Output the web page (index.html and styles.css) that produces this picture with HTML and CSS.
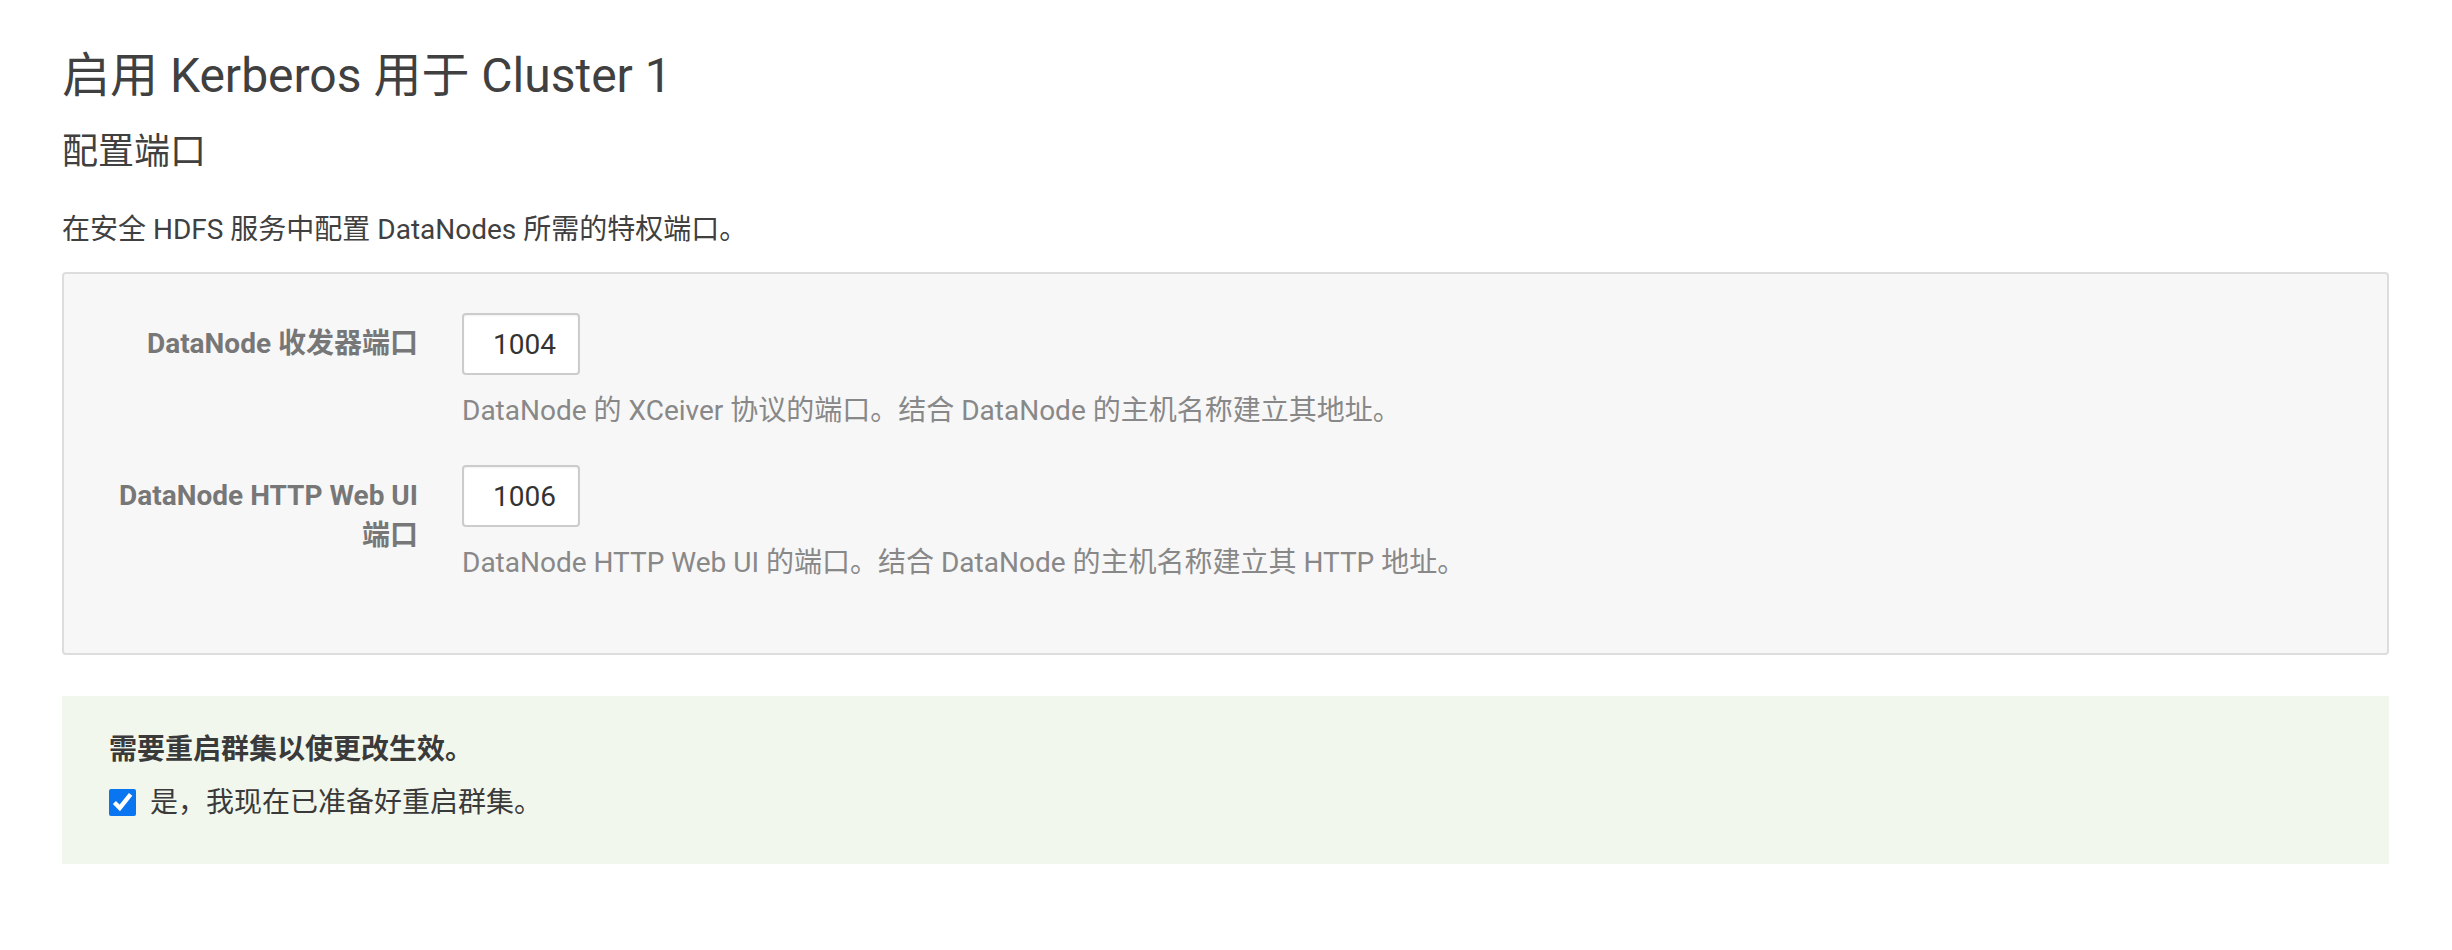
FILE: index.html
```html
<!DOCTYPE html>
<html lang="zh-CN">
<head>
<meta charset="utf-8">
<title>启用 Kerberos 用于 Cluster 1</title>
<link rel="stylesheet" href="styles.css">
</head>
<body>
<div class="page">
  <h1 class="title">启用 Kerberos 用于 Cluster 1</h1>
  <h2 class="subtitle">配置端口</h2>
  <p class="intro">在安全 HDFS 服务中配置 DataNodes 所需的特权端口。</p>

  <div class="panel">
    <div class="form-row">
      <label class="form-label" for="p1">DataNode 收发器端口</label>
      <div class="form-field">
        <input class="port-input" id="p1" type="text" value="1004">
        <div class="help">DataNode 的 XCeiver 协议的端口。结合 DataNode 的主机名称建立其地址。</div>
      </div>
    </div>
    <div class="form-row">
      <label class="form-label" for="p2">DataNode HTTP Web UI 端口</label>
      <div class="form-field">
        <input class="port-input" id="p2" type="text" value="1006">
        <div class="help">DataNode HTTP Web UI 的端口。结合 DataNode 的主机名称建立其 HTTP 地址。</div>
      </div>
    </div>
  </div>

  <div class="notice">
    <div class="notice-title">需要重启群集以使更改生效。</div>
    <label class="confirm">
      <input class="confirm-box" type="checkbox" checked>
      <span>是，我现在已准备好重启群集。</span>
    </label>
  </div>
</div>
</body>
</html>
```

FILE: styles.css
```css
html, body {
  margin: 0;
  padding: 0;
  background: #ffffff;
}

body {
  font-family: Roboto, "Noto Sans CJK SC", sans-serif;
  font-size: 28px;
  line-height: 39px;
  color: #404040;
}

.page {
  padding: 0 63px 0 62px;
}

.title {
  margin: 50px 0 0 0;
  font-size: 48px;
  line-height: 52px;
  font-weight: 400;
  color: #404040;
}

.subtitle {
  margin: 31px 0 0 0;
  font-size: 36px;
  line-height: 39px;
  font-weight: 400;
  color: #404040;
}

.intro {
  margin: 38px 0 0 0;
  font-size: 28px;
  line-height: 39px;
}

.panel {
  margin-top: 23px;
  background: #f7f7f7;
  border: 2px solid #dddddd;
  border-radius: 4px;
  padding: 39px 0 70px 47px;
  display: flex;
  flex-direction: column;
  gap: 34px;
}

.form-row {
  display: flex;
  align-items: flex-start;
  gap: 44px;
}

.form-label {
  width: 307px;
  flex: none;
  text-align: right;
  font-weight: 700;
  color: #777777;
  line-height: 40px;
  padding-top: 11px;
}

.form-field {
  display: flex;
  flex-direction: column;
  align-items: flex-start;
}

.port-input {
  box-sizing: border-box;
  width: 118px;
  height: 62px;
  margin: 0;
  padding: 0 0 0 29px;
  border: 2px solid #cccccc;
  border-radius: 4px;
  background: #ffffff;
  font-family: Roboto, "Noto Sans CJK SC", sans-serif;
  font-size: 28px;
  color: #333333;
  box-shadow: inset 0 1px 2px rgba(0, 0, 0, 0.06);
}

.help {
  margin-top: 15px;
  line-height: 41px;
  color: #888888;
}

.notice {
  margin-top: 41px;
  background: #f2f7ed;
  padding: 33px 47px 41px 47px;
  display: flex;
  flex-direction: column;
  gap: 12px;
}

.notice-title {
  font-weight: 700;
  line-height: 41px;
  color: #3a3a3a;
}

.confirm {
  display: flex;
  align-items: center;
  gap: 14px;
  line-height: 41px;
  color: #3a3a3a;
}

.confirm-box {
  width: 27px;
  height: 27px;
  margin: 0;
  accent-color: #0a75f0;
}
```
